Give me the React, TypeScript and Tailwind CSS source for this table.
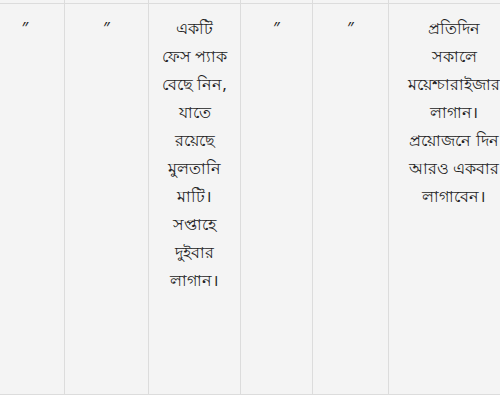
const cols = [
  { w: "w-[79px]", lines: ["″"] },
  { w: "w-[84px]", lines: ["″"] },
  {
    w: "w-[92px]",
    lines: ["একটি", "ফেস প্যাক", "বেছে নিন,", "যাতে", "রয়েছে", "মুলতানি", "মাটি।", "সপ্তাহে", "দুইবার", "লাগান।"],
  },
  { w: "w-[72px]", lines: ["″"] },
  { w: "w-[76px]", lines: ["″"] },
  {
    w: "flex-1",
    lines: ["প্রতিদিন", "সকালে", "ময়েশ্চারাইজার", "লাগান।", "প্রয়োজনে দিন", "আরও একবার", "লাগাবেন।"],
  },
];

export default function App() {
  return (
    <div className="h-[405px] w-[500px] overflow-hidden bg-white font-['Noto_Sans','Liberation_Sans',sans-serif] text-[16px] text-[#222]">
      {/* table, cropped on the left */}
      <div className="-ml-[14px] flex w-[534px] flex-col border-b border-[#dcdcdc] bg-[#f4f4f4]">
        {/* tail of the row above */}
        <div className="flex h-[3px]">
          {cols.map((c, i) => (
            <div key={i} className={`${c.w} border-r border-[#dcdcdc]`} />
          ))}
        </div>
        <div className="flex h-[391px] border-t border-[#dcdcdc]">
          {cols.map((c, i) => (
            <div
              key={i}
              className={`${c.w} border-r border-[#dcdcdc] px-1 pt-[10px] text-center leading-[28px]`}
            >
              {c.lines.map((l, j) => (
                <div key={j} className="whitespace-nowrap">
                  {l}
                </div>
              ))}
            </div>
          ))}
        </div>
      </div>
    </div>
  );
}
